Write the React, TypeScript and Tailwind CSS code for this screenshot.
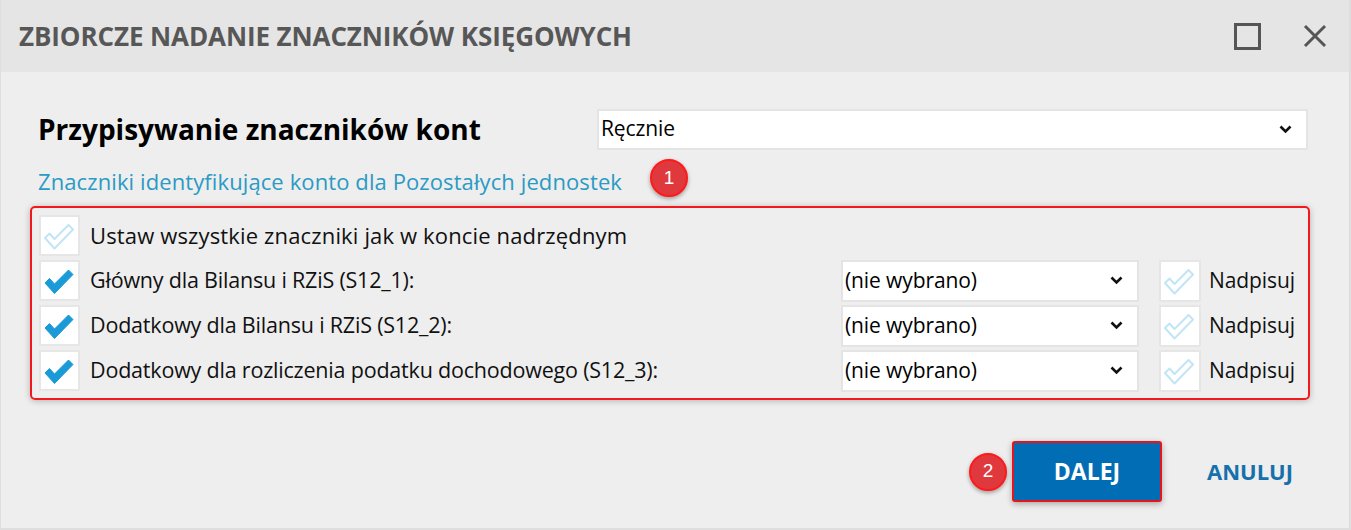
import { useState } from 'react';

// ─── Dialog: Zbiorcze nadanie znaczników księgowych ─────────────────────────

const FONT = "font-['Open_Sans','Noto_Sans',sans-serif]";

const rows = [
  { label: 'Główny dla Bilansu i RZiS (S12_1):' },
  { label: 'Dodatkowy dla Bilansu i RZiS (S12_2):' },
  { label: 'Dodatkowy dla rozliczenia podatku dochodowego (S12_3):' },
];

export default function App() {
  const [checked, setChecked] = useState([true, true, true]);
  const [inherit, setInherit] = useState(false);
  const [overwrite, setOverwrite] = useState([false, false, false]);

  return (
    <div
      className={`${FONT} w-[1351px] h-[530px] bg-[#eeeeee] border-r-2 border-b-2 border-l border-[#dedede] flex flex-col text-[#111]`}
    >
      {/* Header */}
      <div className="h-[72px] shrink-0 bg-[#e5e5e5] flex items-center justify-between pl-[18px] pr-[22px]">
        <h1 className="text-[26px] font-bold text-[#575757] tracking-[-0.1px]">
          ZBIORCZE NADANIE ZNACZNIKÓW KSIĘGOWYCH
        </h1>
        <div className="flex items-center gap-[42px]">
          <svg width="27" height="27" viewBox="0 0 27 27">
            <rect x="1.5" y="1.5" width="24" height="24" fill="none" stroke="#555" strokeWidth="3" />
          </svg>
          <svg width="24" height="24" viewBox="0 0 24 24">
            <path d="M2 2 L22 22 M22 2 L2 22" stroke="#555" strokeWidth="3" />
          </svg>
        </div>
      </div>

      {/* Body */}
      <div className="flex-1 flex flex-col pl-[29px] pr-[40px]">
        <div className="mt-[36px] flex items-center justify-between">
          <h2 className="pl-[8px] text-[28px] font-bold text-black">
            Przypisywanie znaczników kont
          </h2>
          <Select value="Ręcznie" className="w-[711px] h-[41px] mr-[1px]" />
        </div>

        <div className="mt-[11px] h-[40px] flex items-center pl-[8px]">
          <span className="text-[22px] text-[#2b9ac4] tracking-[0.1px]">
            Znaczniki identyfikujące konto dla Pozostałych jednostek
          </span>
          <Badge n={1} className="ml-[28px] -mt-[6px]" />
        </div>

        {/* Highlighted section */}
        <div className="mt-[5px] w-[1280px] border-2 border-[#f2191e] rounded-[5px] shadow-[0_1px_6px_rgba(0,0,0,0.25)] px-[7px] pt-[7px] pb-[7px] flex flex-col gap-[4px]">
          <div className="h-[41px] flex items-center">
            <CheckBox on={inherit} onToggle={() => setInherit((v) => !v)} />
            <span className="ml-[10px] text-[22px] tracking-[0.15px]">
              Ustaw wszystkie znaczniki jak w koncie nadrzędnym
            </span>
          </div>
          {rows.map((r, i) => (
            <div key={i} className="h-[41px] flex items-center">
              <CheckBox
                on={checked[i]}
                onToggle={() => setChecked((c) => c.map((v, j) => (j === i ? !v : v)))}
              />
              <span className="ml-[10px] text-[21.5px] tracking-[-0.2px] flex-1">{r.label}</span>
              <Select value="(nie wybrano)" className="w-[298px] h-[42px]" />
              <div className="ml-[20px]">
                <CheckBox
                  on={overwrite[i]}
                  onToggle={() => setOverwrite((c) => c.map((v, j) => (j === i ? !v : v)))}
                  size="w-[42px] h-[42px]"
                />
              </div>
              <span className="ml-[8px] w-[92px] text-[21px] tracking-[-0.1px]">Nadpisuj</span>
            </div>
          ))}
        </div>

        {/* Footer */}
        <div className="mt-[41px] flex items-center justify-end pr-[16px]">
          <Badge n={2} className="mr-[5px]" />
          <button className="w-[150px] h-[61px] bg-[#006db4] border-2 border-[#e8141c] rounded-[3px] shadow-[0_2px_6px_rgba(0,0,0,0.3)] text-white text-[23px] font-bold">
            DALEJ
          </button>
          <button className="ml-[45px] text-[22px] font-bold text-[#1570ab]">ANULUJ</button>
        </div>
      </div>
    </div>
  );
}

// ─── Sub-components ───────────────────────────────────────────────────────────

function Select({ value, className = '' }: { value: string; className?: string }) {
  return (
    <div
      className={`${className} bg-white border-2 border-[#e4e4e4] flex items-center justify-between pl-[2px] pr-[14px]`}
    >
      <span className="text-[21px] text-black tracking-[-0.1px]">{value}</span>
      <svg width="13" height="9" viewBox="0 0 13 9">
        <path d="M1.5 1.5 L6.5 6.5 L11.5 1.5" fill="none" stroke="#111" strokeWidth="2.6" />
      </svg>
    </div>
  );
}

function CheckBox({
  on,
  onToggle,
  size = 'w-[41px] h-[41px]',
}: {
  on: boolean;
  onToggle: () => void;
  size?: string;
}) {
  return (
    <button
      onClick={onToggle}
      className={`${size} shrink-0 bg-white border-2 border-[#e6e6e6] flex items-center justify-center`}
    >
      <svg width="30" height="26" viewBox="0 0 30 26" className="ml-[-2px] mt-[2px]">
        <path
          d="M1 14 L5.5 9.5 L10.5 15 L24.5 1 L29 5.5 L10.5 24.5 Z"
          fill={on ? '#1a9bd8' : 'none'}
          stroke={on ? '#1a9bd8' : '#c2e5f5'}
          strokeWidth={on ? 1 : 2}
          strokeLinejoin="round"
        />
      </svg>
    </button>
  );
}

function Badge({ n, className = '' }: { n: number; className?: string }) {
  return (
    <div
      className={`${className} w-[38px] h-[38px] rounded-full bg-[#e0393d] border-2 border-[#ff1a1a] shadow-[0_2px_4px_rgba(0,0,0,0.35)] flex items-center justify-center text-white text-[19px] font-['Liberation_Sans',sans-serif]`}
    >
      {n}
    </div>
  );
}
